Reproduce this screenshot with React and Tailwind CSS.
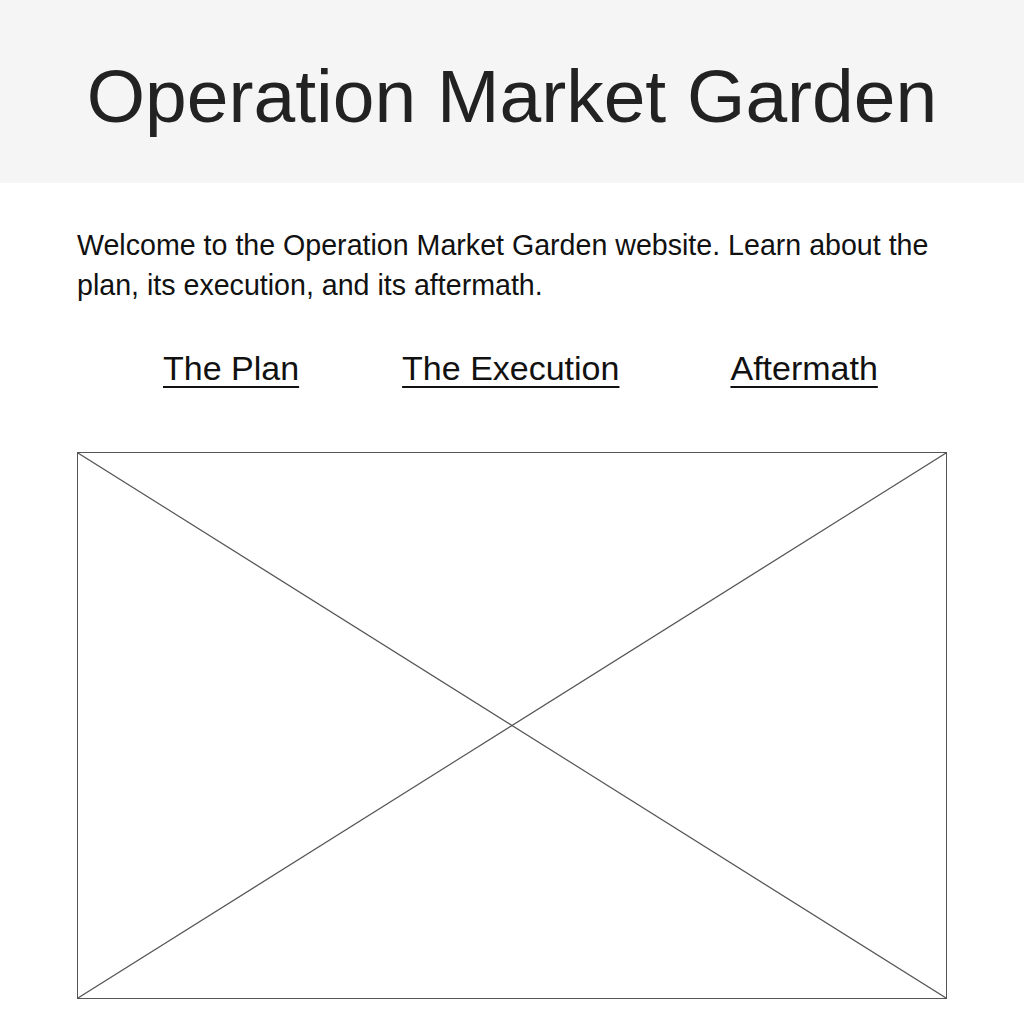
import React from 'react';

const links = [
    { label: 'The Plan', cls: 'ml-[86px]' },
    { label: 'The Execution', cls: 'ml-[103px]' },
    { label: 'Aftermath', cls: 'ml-[111px]' },
];

const App = () => {
    return (
        <div className="min-h-screen bg-white font-['Liberation_Sans',Arial,sans-serif]">
            {/* HEADER */}
            <header className="h-[183px] bg-[#f5f5f5] pt-[54px]">
                <h1 className="text-center text-[75px] leading-[85px] text-[#222]">Operation Market Garden</h1>
            </header>

            <main className="px-[77px]">
                {/* INTRO */}
                <p className="mt-[42px] text-[28.6px] leading-[40px] text-[#111]">
                    Welcome to the Operation Market Garden website. Learn about the plan, its execution, and its aftermath.
                </p>

                {/* NAV */}
                <nav className="mt-[43px] flex">
                    {links.map((l) => (
                        <a
                            key={l.label}
                            href="#"
                            className={`${l.cls} text-[34px] leading-[40px] text-[#111] underline decoration-[2px] underline-offset-[6px]`}
                        >
                            {l.label}
                        </a>
                    ))}
                </nav>

                {/* IMAGE PLACEHOLDER */}
                <div className="relative mt-[64px] h-[547px] border border-[#555]">
                    <svg className="absolute inset-0 h-full w-full" viewBox="0 0 100 100" preserveAspectRatio="none">
                        <line x1="0" y1="0" x2="100" y2="100" stroke="#555" strokeWidth="1.2" vectorEffect="non-scaling-stroke" />
                        <line x1="100" y1="0" x2="0" y2="100" stroke="#555" strokeWidth="1.2" vectorEffect="non-scaling-stroke" />
                    </svg>
                </div>
            </main>
        </div>
    );
};

export default App;
